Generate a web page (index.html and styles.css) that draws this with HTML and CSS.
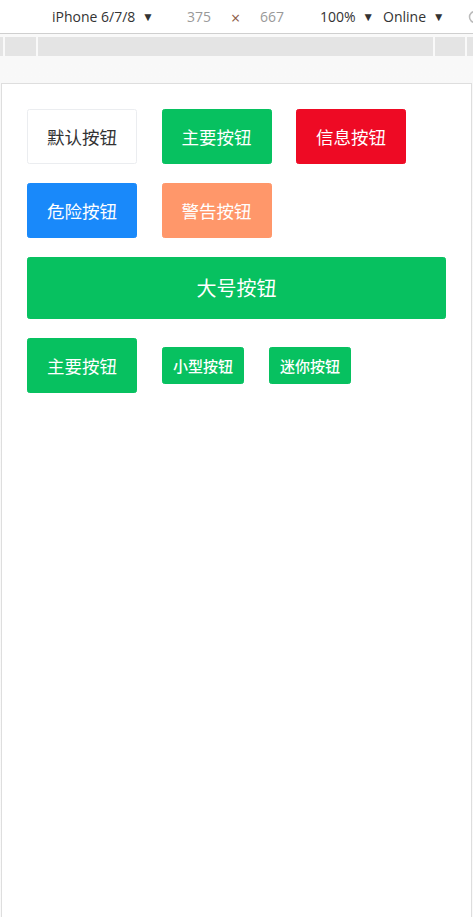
FILE: index.html
```html
<!DOCTYPE html>
<html lang="zh-CN">
<head>
<meta charset="utf-8">
<title>Button</title>
<link rel="stylesheet" href="styles.css">
</head>
<body>
<div class="toolbar">
  <span class="tb-item tb-device">iPhone 6/7/8 <span class="caret">▼</span></span>
  <span class="tb-item tb-dim tb-w">375</span>
  <span class="tb-item tb-x">×</span>
  <span class="tb-item tb-dim tb-h">667</span>
  <span class="tb-item tb-zoom">100% <span class="caret">▼</span></span>
  <span class="tb-item tb-net">Online <span class="caret">▼</span></span>
  <svg class="tb-icon" width="14" height="14" viewBox="0 0 14 14"><circle cx="7" cy="7" r="5.5" fill="none" stroke="#bbb" stroke-width="1.5"/></svg>
</div>
<div class="ruler">
  <span class="seg s1"></span>
  <span class="seg s2"></span>
  <span class="seg s3"></span>
  <span class="seg s4"></span>
  <span class="seg s5"></span>
</div>
<div class="stage">
  <div class="device">
    <div class="row">
      <button class="btn btn-default">默认按钮</button>
      <button class="btn btn-primary">主要按钮</button>
      <button class="btn btn-danger">信息按钮</button>
    </div>
    <div class="row">
      <button class="btn btn-info">危险按钮</button>
      <button class="btn btn-warning">警告按钮</button>
    </div>
    <div class="row">
      <button class="btn btn-primary btn-large">大号按钮</button>
    </div>
    <div class="row row-center">
      <button class="btn btn-primary">主要按钮</button>
      <button class="btn btn-primary btn-small">小型按钮</button>
      <button class="btn btn-primary btn-small">迷你按钮</button>
    </div>
  </div>
</div>
</body>
</html>
```
FILE: styles.css
```css
html, body {
  margin: 0;
  padding: 0;
  height: 917px;
  overflow: hidden;
  background: #f9f9f9;
}
body {
  font-family: "Open Sans", "Liberation Sans", sans-serif;
}
.toolbar {
  box-sizing: border-box;
  height: 34px;
  background: #fff;
  border-bottom: 1px solid #cfcfcf;
  display: flex;
  align-items: center;
  font-size: 14px;
  color: #333;
  white-space: nowrap;
  overflow: hidden;
  padding-left: 52px;
}
.tb-item { flex: none; }
.caret {
  font-size: 12px;
  margin-left: 3px;
  position: relative;
  top: -1px;
}
.tb-device { width: 135px; }
.tb-dim { color: #999; }
.tb-w { width: 44px; }
.tb-x { color: #8c5a45; font-size: 16px; width: 29px; padding-top: 3px; }
.tb-h { width: 60px; }
.tb-zoom { width: 63px; }
.tb-net { width: 85px; }
.tb-icon { flex: none; }
.ruler {
  margin-top: 3px;
  height: 19px;
  display: flex;
  gap: 2px;
}
.seg { background: #e4e4e4; height: 100%; }
.s1 { width: 3px; }
.s2 { width: 31px; }
.s3 { width: 395px; }
.s4 { width: 30px; }
.s5 { flex: 1; }
.stage {
  padding: 27px 1px 0 1px;
  background: linear-gradient(#f8f8f8, #fafafa);
}
.device {
  box-sizing: border-box;
  height: 834px;
  background: #fff;
  border: 1px solid #dedede;
  border-bottom: none;
  padding: 25px 25px 0 25px;
  display: flex;
  flex-direction: column;
  gap: 19px;
}
.row {
  display: flex;
  column-gap: 24.5px;
  align-items: center;
}
.row-center { column-gap: 25px; }
.btn {
  font-family: "Noto Sans CJK SC", "Microsoft YaHei", sans-serif;
  width: 110px;
  height: 55px;
  font-size: 17.5px;
  border-radius: 2.5px;
  border: 1px solid transparent;
  color: #fff;
  padding: 0;
  margin: 0;
  display: flex;
  align-items: center;
  justify-content: center;
  line-height: 1;
}
.btn-default { background: #fff; color: #323233; border-color: #ebedf0; }
.btn-primary { background: #07c160; border-color: #07c160; }
.btn-danger { background: #ee0a24; border-color: #ee0a24; }
.btn-info { background: #1989fa; border-color: #1989fa; }
.btn-warning { background: #ff976a; border-color: #ff976a; }
.btn-large { width: 100%; height: 62px; font-size: 20px; }
.btn-small { width: 82px; height: 37px; font-size: 15px; font-weight: 500; }
```
